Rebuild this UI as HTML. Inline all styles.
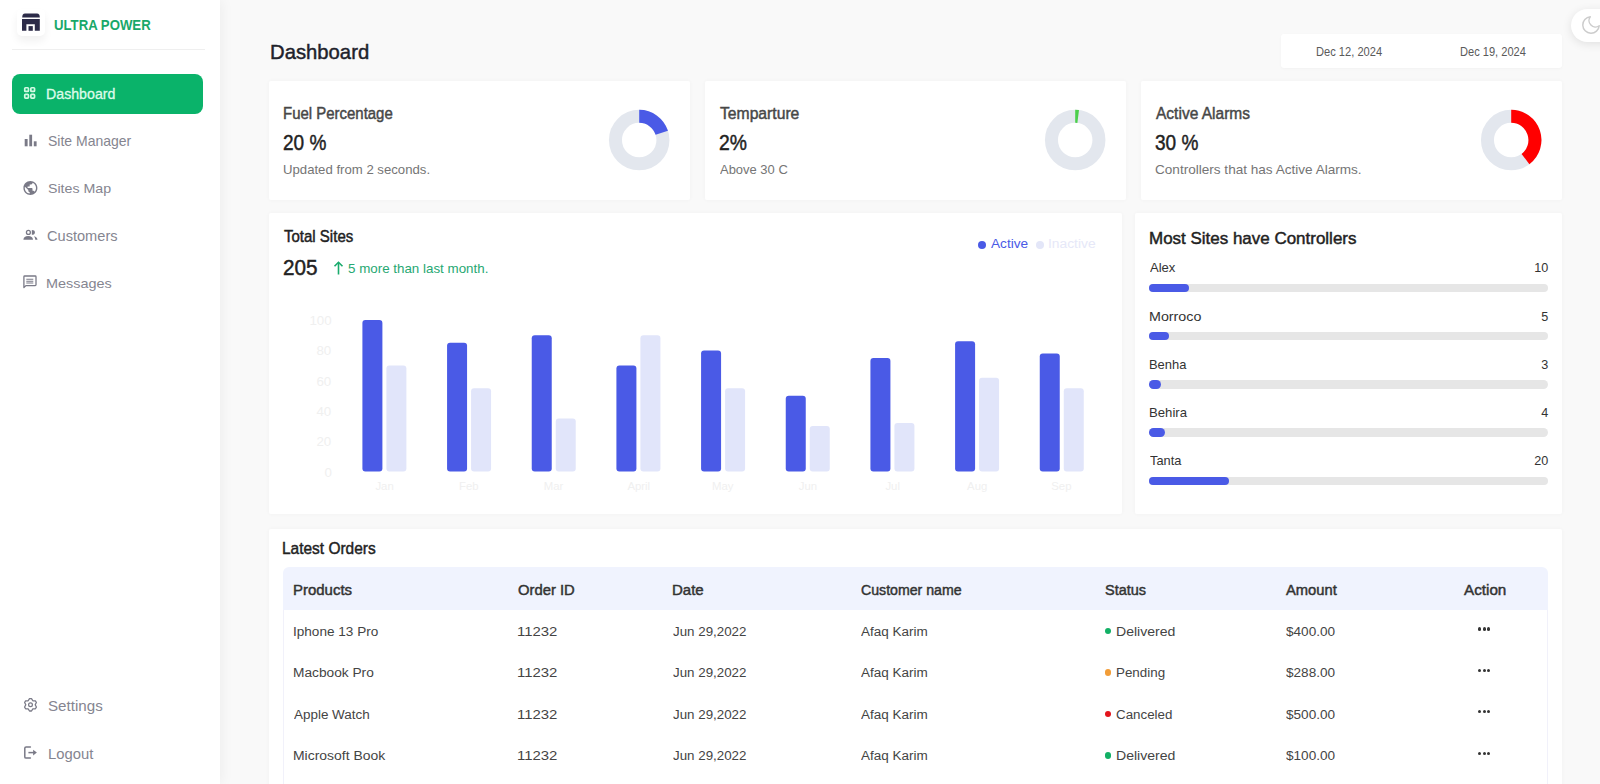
<!DOCTYPE html>
<html><head><meta charset="utf-8"><title>Dashboard</title>
<style>
*{box-sizing:border-box;margin:0;padding:0}
html,body{width:1600px;height:784px;overflow:hidden;background:#f9f9f9;font-family:"Liberation Sans",sans-serif;color:#222;position:relative}
</style></head><body>
<div style="position:absolute;left:0px;top:0px;width:220px;height:784px;background:#ffffff;box-shadow:2px 0 12px rgba(0,0,0,0.05)"></div>
<div style="position:absolute;left:17px;top:9px;width:28px;height:27px;background:#fff;border-radius:5px;box-shadow:0 5px 9px rgba(0,0,0,0.06)"></div>
<svg style="position:absolute;left:22px;top:13px" width="18" height="18" viewBox="0 0 18 18">
<path d="M0.2 4.5 Q0.2 0.4 3 0.4 H15 Q17.8 0.4 17.8 4.5 Z" fill="#2c2b48"/>
<path d="M0 6 H17.8 V17.8 H12.8 V11.2 H4.4 V17.8 H0 Z" fill="#2c2b48"/>
<rect x="6.5" y="13.1" width="4.3" height="4.7" fill="#2c2b48"/>
</svg>
<div style="position:absolute;left:53.58px;top:18.35px;font-size:14.29px;line-height:14.29px;color:#18a86a;white-space:nowrap;font-weight:bold;transform:scaleX(0.9233);transform-origin:0 0">ULTRA POWER</div>
<div style="position:absolute;left:12px;top:49px;width:193px;height:1px;background:#efefef;"></div>
<div style="position:absolute;left:12px;top:74px;width:191px;height:40px;background:#0ab36a;border-radius:8px"></div>
<svg style="position:absolute;left:0;top:0" width="60" height="120" fill="none" stroke="#d2fae3" stroke-width="1.7">
<rect x="24.75" y="87.75" width="3.7" height="3.7" rx="0.8"/><rect x="30.85" y="87.75" width="3.7" height="3.7" rx="0.8"/>
<rect x="24.75" y="94.45" width="3.7" height="3.7" rx="0.8"/><rect x="30.85" y="94.45" width="3.7" height="3.7" rx="0.8"/></svg>
<div style="position:absolute;left:45.67px;top:88.25px;font-size:13.71px;line-height:13.71px;color:#dcfbe9;white-space:nowrap;transform:scaleX(1.0348);transform-origin:0 0;-webkit-text-stroke:0.3px #dcfbe9">Dashboard</div>
<div style="position:absolute;left:47.74px;top:134.02px;font-size:14.57px;line-height:14.57px;color:#858590;white-space:nowrap;transform:scaleX(0.9605);transform-origin:0 0">Site Manager</div>
<div style="position:absolute;left:47.64px;top:181.98px;font-size:13.43px;line-height:13.43px;color:#858590;white-space:nowrap;transform:scaleX(1.0569);transform-origin:0 0">Sites Map</div>
<div style="position:absolute;left:47.45px;top:230.12px;font-size:13.86px;line-height:13.86px;color:#858590;white-space:nowrap;transform:scaleX(1.0530);transform-origin:0 0">Customers</div>
<div style="position:absolute;left:46.00px;top:277.03px;font-size:13.14px;line-height:13.14px;color:#858590;white-space:nowrap;transform:scaleX(1.1000);transform-origin:0 0">Messages</div>
<div style="position:absolute;left:47.64px;top:699.25px;font-size:14.29px;line-height:14.29px;color:#858590;white-space:nowrap;transform:scaleX(1.0600);transform-origin:0 0">Settings</div>
<div style="position:absolute;left:47.62px;top:747.95px;font-size:13.71px;line-height:13.71px;color:#858590;white-space:nowrap;transform:scaleX(1.0805);transform-origin:0 0">Logout</div>
<svg style="position:absolute;left:0;top:0" width="220" height="784" viewBox="0 0 220 784">
<g fill="#7a7a87">
<rect x="24.7" y="139" width="2.9" height="7.3"/><rect x="29.3" y="134.7" width="2.8" height="11.6"/><rect x="33.8" y="141.3" width="2.8" height="5"/>
</g>
<svg x="22" y="179.6" width="16.8" height="16.8" viewBox="0 0 24 24" fill="#7a7a87">
<path d="M12 2C6.48 2 2 6.48 2 12s4.48 10 10 10 10-4.48 10-10S17.52 2 12 2zm-1 17.930c-3.95-.49-7-3.850-7-7.930 0-.62.08-1.210.21-1.790L9 15v1c0 1.1.9 2 2 2v1.930zm6.9-2.540c-.26-.81-1-1.390-1.9-1.390h-1v-3c0-.55-.45-1-1-1H8v-2h2c.55 0 1-.45 1-1V7h2c1.1 0 2-.9 2-2v-.41c2.930 1.190 5 4.060 5 7.410 0 2.080-.8 3.970-2.1 5.390z"/></svg>
<circle cx="28.4" cy="232.4" r="1.95" fill="none" stroke="#7a7a87" stroke-width="1.3"/>
<path d="M31.8 230.1 A3.1 2.35 0 0 1 31.8 234.8 Z" fill="#7a7a87"/>
<path d="M23.4 239.7 Q23.7 236 28.2 236 Q32.7 236 33 239.7 Z" fill="#7a7a87"/>
<path d="M34 236.3 Q37.2 236.9 37.5 239.7 H35.3 Q35.1 237.6 34 236.3 Z" fill="#7a7a87"/>
<path d="M23.9 287.6 V276.8 Q23.9 276 24.7 276 H35.2 Q36 276 36 276.8 V284.8 Q36 285.6 35.2 285.6 H25.9 Z" fill="none" stroke="#7a7a87" stroke-width="1.3" stroke-linejoin="round"/>
<path d="M26.3 279.3 H33.3 M26.3 281.3 H33.3 M26.3 282.9 H33.3" stroke="#7a7a87" stroke-width="1.05"/>
<path d="M29.51 698.58 L31.49 698.58 L32.85 700.73 L35.40 700.84 L36.38 702.54 L35.20 704.80 L36.38 707.06 L35.40 708.76 L32.85 708.87 L31.49 711.02 L29.51 711.02 L28.15 708.87 L25.60 708.76 L24.62 707.06 L25.80 704.80 L24.62 702.54 L25.60 700.84 L28.15 700.73 Z" fill="none" stroke="#7a7a87" stroke-width="1.3" stroke-linejoin="round"/>
<circle cx="30.5" cy="704.8" r="1.9" fill="none" stroke="#7a7a87" stroke-width="1.25"/>
<path d="M30.4 746.9 H26.1 Q24.8 746.9 24.8 748.2 V756.9 Q24.8 758.1 26.1 758.1 H30.4" fill="none" stroke="#7a7a87" stroke-width="1.5" stroke-linecap="round"/>
<path d="M28.4 752.6 H34" stroke="#7a7a87" stroke-width="1.5"/>
<path d="M33.1 749.8 L36.9 752.6 L33.1 755.4 Z" fill="#7a7a87"/>
</svg>
<div style="position:absolute;left:269.53px;top:40.85px;font-size:21.0px;line-height:21.0px;color:#1e222b;white-space:nowrap;transform:scaleX(0.9653);transform-origin:0 0;-webkit-text-stroke:0.45px #1e222b">Dashboard</div>
<div style="position:absolute;left:1281px;top:34px;width:281px;height:34px;background:#fff;border-radius:3px;box-shadow:0 1px 3px rgba(0,0,0,0.03)"></div>
<div style="position:absolute;left:1315.50px;top:46.02px;font-size:12.33px;line-height:12.33px;color:#5a5a5a;white-space:nowrap;transform:scaleX(0.9014);transform-origin:0 0">Dec 12, 2024</div>
<div style="position:absolute;left:1460.40px;top:46.02px;font-size:12.33px;line-height:12.33px;color:#5a5a5a;white-space:nowrap;transform:scaleX(0.8986);transform-origin:0 0">Dec 19, 2024</div>
<div style="position:absolute;left:1571px;top:9px;width:60px;height:33px;background:#fff;border-radius:17px;box-shadow:0 2px 10px rgba(0,0,0,0.10)"></div>
<svg style="position:absolute;left:1579.7px;top:14.2px" width="22" height="22" viewBox="0 0 24 24" fill="none" stroke="#cccccc" stroke-width="1.6" stroke-linecap="round" stroke-linejoin="round">
<path d="M21 12.79A9 9 0 1 1 11.21 3 7 7 0 0 0 21 12.79z"/></svg>
<div style="position:absolute;left:269px;top:81px;width:421px;height:118.5px;background:#fff;border-radius:2px;box-shadow:0 0 5px rgba(0,0,0,0.035)"></div>
<div style="position:absolute;left:282.68px;top:105.25px;font-size:16.29px;line-height:16.29px;color:#474747;white-space:nowrap;transform:scaleX(0.9186);transform-origin:0 0;-webkit-text-stroke:0.45px #474747">Fuel Percentage</div>
<div style="position:absolute;left:282.72px;top:132.47px;font-size:21.57px;line-height:21.57px;color:#222222;white-space:nowrap;transform:scaleX(0.8833);transform-origin:0 0;-webkit-text-stroke:0.45px #222222">20 %</div>
<div style="position:absolute;left:282.53px;top:163.62px;font-size:12.33px;line-height:12.33px;color:#757575;white-space:nowrap;transform:scaleX(1.0676);transform-origin:0 0">Updated from 2 seconds.</div>
<svg style="position:absolute;left:0;top:0" width="1600" height="784"><circle cx="639.2" cy="140.1" r="23.75" fill="none" stroke="#e3e7ee" stroke-width="13"/><path d="M639.20 116.35 A23.75 23.75 0 0 1 661.79 132.76" fill="none" stroke="#4a5ae6" stroke-width="13"/></svg>
<div style="position:absolute;left:705px;top:81px;width:421px;height:118.5px;background:#fff;border-radius:2px;box-shadow:0 0 5px rgba(0,0,0,0.035)"></div>
<div style="position:absolute;left:719.60px;top:105.25px;font-size:16.29px;line-height:16.29px;color:#474747;white-space:nowrap;transform:scaleX(0.9634);transform-origin:0 0;-webkit-text-stroke:0.45px #474747">Temparture</div>
<div style="position:absolute;left:718.70px;top:132.47px;font-size:21.57px;line-height:21.57px;color:#222222;white-space:nowrap;transform:scaleX(0.8967);transform-origin:0 0;-webkit-text-stroke:0.45px #222222">2%</div>
<div style="position:absolute;left:719.60px;top:163.62px;font-size:12.33px;line-height:12.33px;color:#757575;white-space:nowrap;transform:scaleX(1.0516);transform-origin:0 0">Above 30 C</div>
<svg style="position:absolute;left:0;top:0" width="1600" height="784"><circle cx="1075.2" cy="140.1" r="23.75" fill="none" stroke="#e3e7ee" stroke-width="13"/><path d="M1075.20 116.35 A23.75 23.75 0 0 1 1078.18 116.54" fill="none" stroke="#4ccf4c" stroke-width="13"/></svg>
<div style="position:absolute;left:1141px;top:81px;width:421px;height:118.5px;background:#fff;border-radius:2px;box-shadow:0 0 5px rgba(0,0,0,0.035)"></div>
<div style="position:absolute;left:1155.60px;top:105.25px;font-size:16.29px;line-height:16.29px;color:#474747;white-space:nowrap;transform:scaleX(0.9535);transform-origin:0 0;-webkit-text-stroke:0.45px #474747">Active Alarms</div>
<div style="position:absolute;left:1154.72px;top:132.47px;font-size:21.57px;line-height:21.57px;color:#222222;white-space:nowrap;transform:scaleX(0.8833);transform-origin:0 0;-webkit-text-stroke:0.45px #222222">30 %</div>
<div style="position:absolute;left:1154.50px;top:163.62px;font-size:12.33px;line-height:12.33px;color:#757575;white-space:nowrap;transform:scaleX(1.1005);transform-origin:0 0">Controllers that has Active Alarms.</div>
<svg style="position:absolute;left:0;top:0" width="1600" height="784"><circle cx="1511.2" cy="140.1" r="23.75" fill="none" stroke="#e3e7ee" stroke-width="13"/><path d="M1511.20 116.35 A23.75 23.75 0 0 1 1525.49 159.07" fill="none" stroke="#ff0000" stroke-width="13"/></svg>
<div style="position:absolute;left:269px;top:213px;width:853px;height:301px;background:#fff;border-radius:2px;box-shadow:0 0 5px rgba(0,0,0,0.035)"></div>
<div style="position:absolute;left:283.90px;top:229.35px;font-size:15.71px;line-height:15.71px;color:#222222;white-space:nowrap;transform:scaleX(0.9556);transform-origin:0 0;-webkit-text-stroke:0.45px #222222">Total Sites</div>
<div style="position:absolute;left:282.93px;top:258.20px;font-size:21.29px;line-height:21.29px;color:#222222;white-space:nowrap;transform:scaleX(0.9735);transform-origin:0 0;-webkit-text-stroke:0.45px #222222">205</div>
<svg style="position:absolute;left:333px;top:261px" width="11" height="14" viewBox="0 0 11 14" fill="none" stroke="#1aab6d" stroke-width="1.6">
<path d="M5.5 13.5 V1.5"/><path d="M1.5 5.3 L5.5 1.3 L9.5 5.3"/></svg>
<div style="position:absolute;left:347.61px;top:261.58px;font-size:13.44px;line-height:13.44px;color:#26a872;white-space:nowrap;transform:scaleX(0.9942);transform-origin:0 0">5 more than last month.</div>
<div style="position:absolute;left:978px;top:241px;width:8px;height:8px;border-radius:50%;background:#4a5ae6"></div>
<div style="position:absolute;left:990.80px;top:237.78px;font-size:12.61px;line-height:12.61px;color:#4a5ae6;white-space:nowrap;transform:scaleX(1.0824);transform-origin:0 0">Active</div>
<div style="position:absolute;left:1036.4px;top:241px;width:8px;height:8px;border-radius:50%;background:#e3e6f8"></div>
<div style="position:absolute;left:1048.30px;top:237.78px;font-size:12.61px;line-height:12.61px;color:#e6e8f8;white-space:nowrap;transform:scaleX(1.0952);transform-origin:0 0">Inactive</div>
<div style="position:absolute;left:309.40px;top:313.59px;font-size:13.3px;line-height:13.3px;color:#f0f0f0;white-space:nowrap">100</div>
<div style="position:absolute;left:316.40px;top:343.93px;font-size:13.3px;line-height:13.3px;color:#f0f0f0;white-space:nowrap">80</div>
<div style="position:absolute;left:316.40px;top:375.27px;font-size:13.3px;line-height:13.3px;color:#f0f0f0;white-space:nowrap">60</div>
<div style="position:absolute;left:316.40px;top:404.61px;font-size:13.3px;line-height:13.3px;color:#f0f0f0;white-space:nowrap">40</div>
<div style="position:absolute;left:316.40px;top:434.95px;font-size:13.3px;line-height:13.3px;color:#f0f0f0;white-space:nowrap">20</div>
<div style="position:absolute;left:324.40px;top:466.29px;font-size:13.3px;line-height:13.3px;color:#f0f0f0;white-space:nowrap">0</div>
<div style="position:absolute;left:375.40px;top:480.74px;font-size:11.36px;line-height:11.36px;color:#f0f0f0;white-space:nowrap">Jan</div>
<div style="position:absolute;left:459.07px;top:480.74px;font-size:11.36px;line-height:11.36px;color:#f0f0f0;white-space:nowrap">Feb</div>
<div style="position:absolute;left:543.74px;top:480.74px;font-size:11.36px;line-height:11.36px;color:#f0f0f0;white-space:nowrap">Mar</div>
<div style="position:absolute;left:627.41px;top:480.74px;font-size:11.36px;line-height:11.36px;color:#f0f0f0;white-space:nowrap">April</div>
<div style="position:absolute;left:712.08px;top:480.74px;font-size:11.36px;line-height:11.36px;color:#f0f0f0;white-space:nowrap">May</div>
<div style="position:absolute;left:798.75px;top:480.74px;font-size:11.36px;line-height:11.36px;color:#f0f0f0;white-space:nowrap">Jun</div>
<div style="position:absolute;left:885.42px;top:480.74px;font-size:11.36px;line-height:11.36px;color:#f0f0f0;white-space:nowrap">Jul</div>
<div style="position:absolute;left:967.09px;top:480.74px;font-size:11.36px;line-height:11.36px;color:#f0f0f0;white-space:nowrap">Aug</div>
<div style="position:absolute;left:1051.26px;top:480.74px;font-size:11.36px;line-height:11.36px;color:#f0f0f0;white-space:nowrap">Sep</div>
<svg style="position:absolute;left:0;top:0" width="1600" height="784"><rect x="362.40" y="320.10" width="20" height="151.40" rx="3" fill="#4a5ae6"/><rect x="386.40" y="365.52" width="20" height="105.98" rx="3" fill="#e1e5fa"/><rect x="447.07" y="342.81" width="20" height="128.69" rx="3" fill="#4a5ae6"/><rect x="471.07" y="388.23" width="20" height="83.27" rx="3" fill="#e1e5fa"/><rect x="531.74" y="335.24" width="20" height="136.26" rx="3" fill="#4a5ae6"/><rect x="555.74" y="418.51" width="20" height="52.99" rx="3" fill="#e1e5fa"/><rect x="616.41" y="365.52" width="20" height="105.98" rx="3" fill="#4a5ae6"/><rect x="640.41" y="335.24" width="20" height="136.26" rx="3" fill="#e1e5fa"/><rect x="701.08" y="350.38" width="20" height="121.12" rx="3" fill="#4a5ae6"/><rect x="725.08" y="388.23" width="20" height="83.27" rx="3" fill="#e1e5fa"/><rect x="785.75" y="395.80" width="20" height="75.70" rx="3" fill="#4a5ae6"/><rect x="809.75" y="426.08" width="20" height="45.42" rx="3" fill="#e1e5fa"/><rect x="870.42" y="357.95" width="20" height="113.55" rx="3" fill="#4a5ae6"/><rect x="894.42" y="423.05" width="20" height="48.45" rx="3" fill="#e1e5fa"/><rect x="955.09" y="341.30" width="20" height="130.20" rx="3" fill="#4a5ae6"/><rect x="979.09" y="377.63" width="20" height="93.87" rx="3" fill="#e1e5fa"/><rect x="1039.76" y="353.41" width="20" height="118.09" rx="3" fill="#4a5ae6"/><rect x="1063.76" y="388.23" width="20" height="83.27" rx="3" fill="#e1e5fa"/></svg>
<div style="position:absolute;left:1135px;top:213px;width:427px;height:301px;background:#fff;border-radius:2px;box-shadow:0 0 5px rgba(0,0,0,0.035)"></div>
<div style="position:absolute;left:1148.78px;top:231.30px;font-size:16.71px;line-height:16.71px;color:#222222;white-space:nowrap;transform:scaleX(1.0167);transform-origin:0 0;-webkit-text-stroke:0.45px #222222">Most Sites have Controllers</div>
<div style="position:absolute;left:1149.80px;top:261.82px;font-size:12.33px;line-height:12.33px;color:#333333;white-space:nowrap;transform:scaleX(1.0583);transform-origin:0 0">Alex</div>
<div style="position:absolute;left:1534.30px;top:261.58px;font-size:12.61px;line-height:12.61px;color:#333333;white-space:nowrap">10</div>
<div style="position:absolute;left:1149px;top:283.50px;width:399px;height:8.5px;border-radius:5px;background:#e6e6e6"></div>
<div style="position:absolute;left:1149px;top:283.50px;width:39.9px;height:8.5px;border-radius:5px;background:#4a5ae6"></div>
<div style="position:absolute;left:1148.64px;top:311.10px;font-size:12.33px;line-height:12.33px;color:#333333;white-space:nowrap;transform:scaleX(1.1591);transform-origin:0 0">Morroco</div>
<div style="position:absolute;left:1541.30px;top:310.86px;font-size:12.61px;line-height:12.61px;color:#333333;white-space:nowrap">5</div>
<div style="position:absolute;left:1149px;top:331.78px;width:399px;height:8.5px;border-radius:5px;background:#e6e6e6"></div>
<div style="position:absolute;left:1149px;top:331.78px;width:19.9px;height:8.5px;border-radius:5px;background:#4a5ae6"></div>
<div style="position:absolute;left:1148.75px;top:359.38px;font-size:12.33px;line-height:12.33px;color:#333333;white-space:nowrap;transform:scaleX(1.0486);transform-origin:0 0">Benha</div>
<div style="position:absolute;left:1541.30px;top:359.14px;font-size:12.61px;line-height:12.61px;color:#333333;white-space:nowrap">3</div>
<div style="position:absolute;left:1149px;top:380.06px;width:399px;height:8.5px;border-radius:5px;background:#e6e6e6"></div>
<div style="position:absolute;left:1149px;top:380.06px;width:12.0px;height:8.5px;border-radius:5px;background:#4a5ae6"></div>
<div style="position:absolute;left:1148.73px;top:406.66px;font-size:12.33px;line-height:12.33px;color:#333333;white-space:nowrap;transform:scaleX(1.0657);transform-origin:0 0">Behira</div>
<div style="position:absolute;left:1541.30px;top:407.42px;font-size:12.61px;line-height:12.61px;color:#333333;white-space:nowrap">4</div>
<div style="position:absolute;left:1149px;top:428.34px;width:399px;height:8.5px;border-radius:5px;background:#e6e6e6"></div>
<div style="position:absolute;left:1149px;top:428.34px;width:16.0px;height:8.5px;border-radius:5px;background:#4a5ae6"></div>
<div style="position:absolute;left:1149.80px;top:454.94px;font-size:12.33px;line-height:12.33px;color:#333333;white-space:nowrap;transform:scaleX(1.0400);transform-origin:0 0">Tanta</div>
<div style="position:absolute;left:1534.30px;top:454.70px;font-size:12.61px;line-height:12.61px;color:#333333;white-space:nowrap">20</div>
<div style="position:absolute;left:1149px;top:476.62px;width:399px;height:8.5px;border-radius:5px;background:#e6e6e6"></div>
<div style="position:absolute;left:1149px;top:476.62px;width:79.8px;height:8.5px;border-radius:5px;background:#4a5ae6"></div>
<div style="position:absolute;left:269px;top:529px;width:1293px;height:300px;background:#fff;border-radius:2px;box-shadow:0 0 5px rgba(0,0,0,0.035)"></div>
<div style="position:absolute;left:282.48px;top:540.67px;font-size:16.86px;line-height:16.86px;color:#222222;white-space:nowrap;transform:scaleX(0.9168);transform-origin:0 0;-webkit-text-stroke:0.45px #222222">Latest Orders</div>
<div style="position:absolute;left:283px;top:609px;width:1px;height:180px;background:#f1f1fa;"></div>
<div style="position:absolute;left:1547px;top:609px;width:1px;height:180px;background:#f1f1fa;"></div>
<div style="position:absolute;left:283px;top:567px;width:1265px;height:43px;background:#f0f3fe;border-radius:6px 6px 0 0"></div>
<div style="position:absolute;left:292.95px;top:583.45px;font-size:14.29px;line-height:14.29px;color:#333333;white-space:nowrap;transform:scaleX(1.0473);transform-origin:0 0;-webkit-text-stroke:0.45px #333333">Products</div>
<div style="position:absolute;left:518.00px;top:583.45px;font-size:14.29px;line-height:14.29px;color:#333333;white-space:nowrap;transform:scaleX(1.0364);transform-origin:0 0;-webkit-text-stroke:0.45px #333333">Order ID</div>
<div style="position:absolute;left:672.35px;top:583.45px;font-size:14.29px;line-height:14.29px;color:#333333;white-space:nowrap;transform:scaleX(1.0517);transform-origin:0 0;-webkit-text-stroke:0.45px #333333">Date</div>
<div style="position:absolute;left:861.00px;top:583.45px;font-size:14.29px;line-height:14.29px;color:#333333;white-space:nowrap;transform:scaleX(0.9902);transform-origin:0 0;-webkit-text-stroke:0.45px #333333">Customer name</div>
<div style="position:absolute;left:1105.30px;top:583.45px;font-size:14.29px;line-height:14.29px;color:#333333;white-space:nowrap;transform:scaleX(1.0150);transform-origin:0 0;-webkit-text-stroke:0.45px #333333">Status</div>
<div style="position:absolute;left:1286.20px;top:583.45px;font-size:14.29px;line-height:14.29px;color:#333333;white-space:nowrap;transform:scaleX(1.0320);transform-origin:0 0;-webkit-text-stroke:0.45px #333333">Amount</div>
<div style="position:absolute;left:1463.70px;top:583.45px;font-size:14.29px;line-height:14.29px;color:#333333;white-space:nowrap;transform:scaleX(1.0667);transform-origin:0 0;-webkit-text-stroke:0.45px #333333">Action</div>
<div style="position:absolute;left:292.96px;top:624.92px;font-size:13.03px;line-height:13.03px;color:#444444;white-space:nowrap;transform:scaleX(1.0425);transform-origin:0 0">Iphone 13 Pro</div>
<div style="position:absolute;left:516.85px;top:624.92px;font-size:13.03px;line-height:13.03px;color:#444444;white-space:nowrap;transform:scaleX(1.1471);transform-origin:0 0">11232</div>
<div style="position:absolute;left:673.40px;top:624.92px;font-size:13.03px;line-height:13.03px;color:#444444;white-space:nowrap;transform:scaleX(1.0254);transform-origin:0 0">Jun 29,2022</div>
<div style="position:absolute;left:861.00px;top:624.92px;font-size:13.03px;line-height:13.03px;color:#444444;white-space:nowrap;transform:scaleX(1.0375);transform-origin:0 0">Afaq Karim</div>
<div style="position:absolute;left:1104.8px;top:627.90px;width:6.5px;height:6.5px;border-radius:50%;background:#12b065"></div>
<div style="position:absolute;left:1116.32px;top:624.92px;font-size:13.03px;line-height:13.03px;color:#444444;white-space:nowrap;transform:scaleX(1.0811);transform-origin:0 0">Delivered</div>
<div style="position:absolute;left:1286.20px;top:624.92px;font-size:13.03px;line-height:13.03px;color:#444444;white-space:nowrap;transform:scaleX(1.0426);transform-origin:0 0">$400.00</div>
<div style="position:absolute;left:1478.0px;top:627.40px;width:3.2px;height:3.2px;border-radius:50%;background:#333"></div>
<div style="position:absolute;left:1482.6px;top:627.40px;width:3.2px;height:3.2px;border-radius:50%;background:#333"></div>
<div style="position:absolute;left:1487.2px;top:627.40px;width:3.2px;height:3.2px;border-radius:50%;background:#333"></div>
<div style="position:absolute;left:292.95px;top:666.37px;font-size:13.03px;line-height:13.03px;color:#444444;white-space:nowrap;transform:scaleX(1.0533);transform-origin:0 0">Macbook Pro</div>
<div style="position:absolute;left:516.85px;top:666.37px;font-size:13.03px;line-height:13.03px;color:#444444;white-space:nowrap;transform:scaleX(1.1471);transform-origin:0 0">11232</div>
<div style="position:absolute;left:673.40px;top:666.37px;font-size:13.03px;line-height:13.03px;color:#444444;white-space:nowrap;transform:scaleX(1.0254);transform-origin:0 0">Jun 29,2022</div>
<div style="position:absolute;left:861.00px;top:666.37px;font-size:13.03px;line-height:13.03px;color:#444444;white-space:nowrap;transform:scaleX(1.0375);transform-origin:0 0">Afaq Karim</div>
<div style="position:absolute;left:1104.8px;top:669.35px;width:6.5px;height:6.5px;border-radius:50%;background:#f29d38"></div>
<div style="position:absolute;left:1116.37px;top:666.37px;font-size:13.03px;line-height:13.03px;color:#444444;white-space:nowrap;transform:scaleX(1.0283);transform-origin:0 0">Pending</div>
<div style="position:absolute;left:1286.20px;top:666.37px;font-size:13.03px;line-height:13.03px;color:#444444;white-space:nowrap;transform:scaleX(1.0426);transform-origin:0 0">$288.00</div>
<div style="position:absolute;left:1478.0px;top:668.85px;width:3.2px;height:3.2px;border-radius:50%;background:#333"></div>
<div style="position:absolute;left:1482.6px;top:668.85px;width:3.2px;height:3.2px;border-radius:50%;background:#333"></div>
<div style="position:absolute;left:1487.2px;top:668.85px;width:3.2px;height:3.2px;border-radius:50%;background:#333"></div>
<div style="position:absolute;left:294.00px;top:707.82px;font-size:13.03px;line-height:13.03px;color:#444444;white-space:nowrap;transform:scaleX(1.0329);transform-origin:0 0">Apple Watch</div>
<div style="position:absolute;left:516.85px;top:707.82px;font-size:13.03px;line-height:13.03px;color:#444444;white-space:nowrap;transform:scaleX(1.1471);transform-origin:0 0">11232</div>
<div style="position:absolute;left:673.40px;top:707.82px;font-size:13.03px;line-height:13.03px;color:#444444;white-space:nowrap;transform:scaleX(1.0254);transform-origin:0 0">Jun 29,2022</div>
<div style="position:absolute;left:861.00px;top:707.82px;font-size:13.03px;line-height:13.03px;color:#444444;white-space:nowrap;transform:scaleX(1.0375);transform-origin:0 0">Afaq Karim</div>
<div style="position:absolute;left:1104.8px;top:710.80px;width:6.5px;height:6.5px;border-radius:50%;background:#e3141c"></div>
<div style="position:absolute;left:1116.38px;top:707.82px;font-size:13.03px;line-height:13.03px;color:#444444;white-space:nowrap;transform:scaleX(1.0245);transform-origin:0 0">Canceled</div>
<div style="position:absolute;left:1286.20px;top:707.82px;font-size:13.03px;line-height:13.03px;color:#444444;white-space:nowrap;transform:scaleX(1.0426);transform-origin:0 0">$500.00</div>
<div style="position:absolute;left:1478.0px;top:710.30px;width:3.2px;height:3.2px;border-radius:50%;background:#333"></div>
<div style="position:absolute;left:1482.6px;top:710.30px;width:3.2px;height:3.2px;border-radius:50%;background:#333"></div>
<div style="position:absolute;left:1487.2px;top:710.30px;width:3.2px;height:3.2px;border-radius:50%;background:#333"></div>
<div style="position:absolute;left:292.93px;top:749.27px;font-size:13.03px;line-height:13.03px;color:#444444;white-space:nowrap;transform:scaleX(1.0706);transform-origin:0 0">Microsoft Book</div>
<div style="position:absolute;left:516.85px;top:749.27px;font-size:13.03px;line-height:13.03px;color:#444444;white-space:nowrap;transform:scaleX(1.1471);transform-origin:0 0">11232</div>
<div style="position:absolute;left:673.40px;top:749.27px;font-size:13.03px;line-height:13.03px;color:#444444;white-space:nowrap;transform:scaleX(1.0254);transform-origin:0 0">Jun 29,2022</div>
<div style="position:absolute;left:861.00px;top:749.27px;font-size:13.03px;line-height:13.03px;color:#444444;white-space:nowrap;transform:scaleX(1.0375);transform-origin:0 0">Afaq Karim</div>
<div style="position:absolute;left:1104.8px;top:752.25px;width:6.5px;height:6.5px;border-radius:50%;background:#12b065"></div>
<div style="position:absolute;left:1116.32px;top:749.27px;font-size:13.03px;line-height:13.03px;color:#444444;white-space:nowrap;transform:scaleX(1.0811);transform-origin:0 0">Delivered</div>
<div style="position:absolute;left:1286.20px;top:749.27px;font-size:13.03px;line-height:13.03px;color:#444444;white-space:nowrap;transform:scaleX(1.0426);transform-origin:0 0">$100.00</div>
<div style="position:absolute;left:1478.0px;top:751.75px;width:3.2px;height:3.2px;border-radius:50%;background:#333"></div>
<div style="position:absolute;left:1482.6px;top:751.75px;width:3.2px;height:3.2px;border-radius:50%;background:#333"></div>
<div style="position:absolute;left:1487.2px;top:751.75px;width:3.2px;height:3.2px;border-radius:50%;background:#333"></div>
</body></html>
